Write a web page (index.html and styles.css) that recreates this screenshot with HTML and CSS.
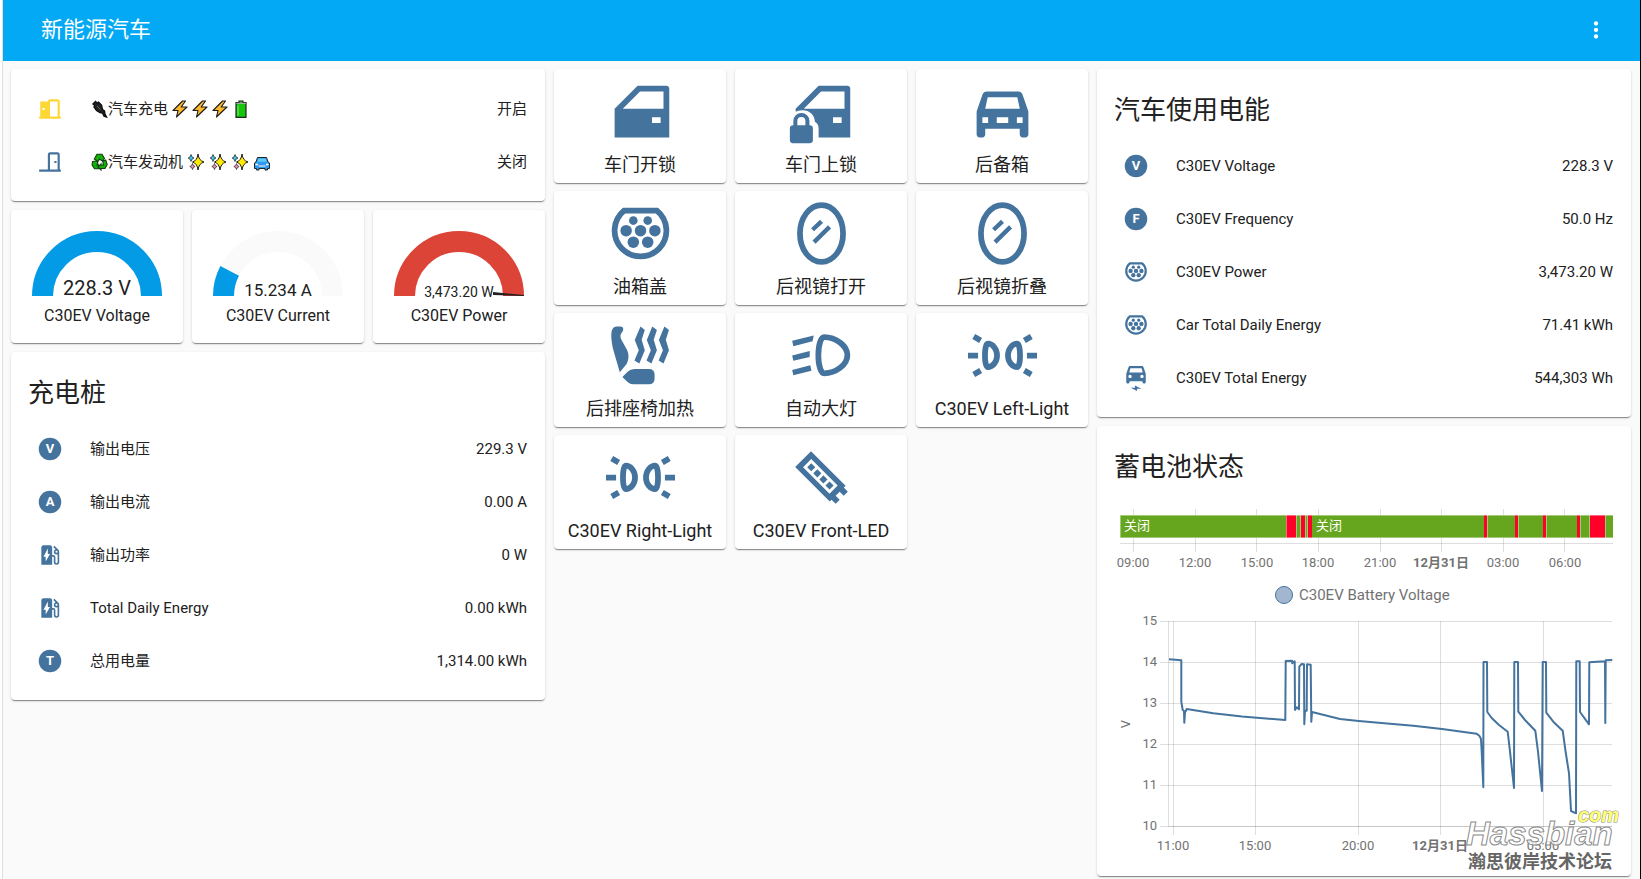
FILE: index.html
```html
<!DOCTYPE html>
<html lang="zh-CN">
<head>
<meta charset="utf-8">
<title>新能源汽车</title>
<link rel="stylesheet" href="styles.css">
</head>
<body>
<svg class="sprite" aria-hidden="true">
  <symbol id="door-open" viewBox="0 0 24 24"><path d="M12,3C10.89,3 10,3.89 10,5H3V19H2V21H22V19H21V5C21,3.89 20.11,3 19,3H12M12,5H19V19H12V5M5,11H7V13H5V11Z"/></symbol>
  <symbol id="door-closed" viewBox="0 0 24 24"><path d="M16,11H18V13H16V11M12,3H19C20.11,3 21,3.89 21,5V19H22V21H2V19H10V5C10,3.89 10.89,3 12,3M12,5V19H19V5H12Z"/></symbol>
  <symbol id="ev-station" viewBox="0 0 24 24"><path d="M19.77,7.23L19.78,7.22L16.06,3.5L15,4.56L17.11,6.67C16.17,7.03 15.5,7.93 15.5,9A2.5,2.5 0 0,0 18,11.5C18.36,11.5 18.69,11.42 19,11.29V18.5A1,1 0 0,1 18,19.5A1,1 0 0,1 17,18.5V14A2,2 0 0,0 15,12H14V5A2,2 0 0,0 12,3H6A2,2 0 0,0 4,5V21H14V13.5H15.5V18.5A2.5,2.5 0 0,0 18,21A2.5,2.5 0 0,0 20.5,18.5V9C20.5,8.31 20.22,7.68 19.77,7.23M18,10A1,1 0 0,1 17,9A1,1 0 0,1 18,8A1,1 0 0,1 19,9A1,1 0 0,1 18,10M8,18V13.5H6L10,6V11H12L8,18Z"/></symbol>
  <symbol id="car-electric" viewBox="0 0 24 24"><path d="M18.92 2C18.72 1.42 18.16 1 17.5 1H6.5C5.84 1 5.29 1.42 5.08 2L3 8V16C3 16.55 3.45 17 4 17H5C5.55 17 6 16.55 6 16V15H18V16C18 16.55 18.45 17 19 17H20C20.55 17 21 16.55 21 16V8L18.92 2M6.85 3H17.14L18.22 7H5.77L6.85 3M6.5 12C5.67 12 5 11.33 5 10.5S5.67 9 6.5 9 8 9.67 8 10.5 7.33 12 6.5 12M17.5 12C16.67 12 16 11.33 16 10.5S16.67 9 17.5 9 19 9.67 19 10.5 18.33 12 17.5 12M7 21H11V19L17 22H13V24L7 21Z"/></symbol>
  <symbol id="plug" viewBox="0 0 24 24"><path d="M6.34 4H17.66A9 9 0 1 1 6.34 4Z" fill="none" stroke="currentColor" stroke-width="2"/><circle cx="9.5" cy="7.5" r="1.5"/><circle cx="14.5" cy="7.5" r="1.5"/><circle cx="7" cy="11" r="2"/><circle cx="12" cy="11" r="2"/><circle cx="17" cy="11" r="2"/><circle cx="9.5" cy="15" r="2"/><circle cx="14.5" cy="15" r="2"/></symbol>
  <symbol id="car-door" viewBox="0 0 24 24"><path d="M19 14H16V16H19V14M22 21H3V11L11 3H21C21.55 3 22 3.45 22 4V21M11.83 5L5.83 11H20V5H11.83Z"/></symbol>
  <symbol id="car-door-lock" viewBox="0 0 24 24"><path d="M19 14H16V16H19V14M22 21H3V11L11 3H21C21.55 3 22 3.45 22 4V21M11.83 5L5.83 11H20V5H11.83Z"/><path d="M0 12H3.2C6.6 10.6 9.7 12.5 9.7 15.6C10.6 16 11 17 11 18V24H0Z" fill="#fff"/><rect x="1" y="16.8" width="8" height="6.2" rx="1.1"/><path d="M2.9 17.5V15.3A2.1 2.1 0 0 1 7.1 15.3V17.5" fill="none" stroke="currentColor" stroke-width="1.4"/></symbol>
  <symbol id="car-back" viewBox="0 0 24 24"><path d="M17.5 5H6.5C5.84 5 5.29 5.42 5.08 6L3 12V20C3 20.55 3.45 21 4 21H5C5.55 21 6 20.55 6 20V18H18V20C18 20.55 18.45 21 19 21H20C20.55 21 21 20.55 21 20V12L18.92 6C18.72 5.42 18.16 5 17.5 5M6.85 7H17.14L18.02 11H5.98L6.85 7M7 16H5V14H7V16M14 16H10V14H14V16M19 16H17V14H19V16Z"/></symbol>
  <symbol id="mirror" viewBox="0 0 24 24"><g fill="none" stroke="currentColor"><ellipse cx="12" cy="12" rx="7.5" ry="9.9" stroke-width="2"/><path d="M8.9 10.7L12 7.8M9.4 15L14.8 9.7" stroke-width="1.5"/></g></symbol>
  <symbol id="seat-heater" viewBox="0 0 24 24"><path d="M3.8 1.9H5C6.2 1.9 6.2 3.1 5.7 3.7C4.9 4.6 4.8 5.4 5.4 6.6L7.2 9.8C8.1 11.6 8 13.4 7.1 15L4.8 17.8L2.7 10.6C2 8.2 1.6 5 2 3.4C2.3 2.4 2.9 1.9 3.8 1.9ZM5.7 19.5L7.6 17.6Q8.5 16.7 9.9 16.7H14.9Q16.9 16.7 16.9 18.7V20Q16.9 22 14.9 22H9.4Q8.4 22 7.5 21.2Z"/><path d="M12 1.9L13.5 3.1L12.4 6.5L13.5 10.2L11.6 14.8L9.9 13.7L11.4 10.2L10 6.6ZM16.1 1.9L17.7 3.1L16.6 6.5L17.7 10.2L15.8 14.8L14.1 13.7L15.6 10.2L14.2 6.6ZM20.3 1.9L21.9 3.1L20.8 6.5L21.9 10.2L20 14.8L18.3 13.7L19.8 10.2L18.4 6.6Z"/></symbol>
  <symbol id="headlight" viewBox="0 0 24 24"><path d="M12.9 5.6C11.9 5.6 10.9 8 10.9 11.9C10.9 15.8 11.9 18.2 12.9 18.2C17 18.2 21 15.2 21 11.9C21 8.6 17 5.6 12.9 5.6Z" fill="none" stroke="currentColor" stroke-width="2"/><path d="M1.8 6.9L9.3 5L8.9 7L2.2 8.8ZM1.8 12L7.9 10.4V12.5L2.2 13.8ZM1.8 17L8.1 15.4L8.5 17.3L2.2 18.9Z"/></symbol>
  <symbol id="parking-light" viewBox="0 0 24 24"><g fill="none" stroke="currentColor" stroke-width="2"><path d="M6.9 7.9C6.2 7.9 5.9 10 5.9 12S6.2 16 6.9 16C8.6 16 10.1 14.2 10.1 12S8.6 7.9 6.9 7.9ZM17.1 7.9C17.8 7.9 18.1 10 18.1 12S17.8 16 17.1 16C15.4 16 13.9 14.2 13.9 12S15.4 7.9 17.1 7.9ZM0 12H3.5M20.5 12H24M2 5.4L4.4 6.8M2 18.6L4.4 17.2M22 5.4L19.6 6.8M22 18.6L19.6 17.2"/></g></symbol>
  <symbol id="led-strip" viewBox="0 0 24 24"><g transform="translate(5.6 5.6) rotate(45)"><path fill-rule="evenodd" d="M0 -3.9H17V-3H19V-1H17V1H19V3H17V3.9H0ZM2 -2V2H15V-2Z"/><path d="M3 -1H5V1H3ZM6 -1H8V1H6ZM9 -1H11V1H9ZM12 -1H14V1H12Z"/></g></symbol>
  <symbol id="bolt" viewBox="0 0 16 18"><path d="M10.5 1L1 10.5H6L4.5 17L15 7H9.2L13.5 1Z" fill="#fdb82b" stroke="#1b1b1b" stroke-width="1.1" stroke-linejoin="round"/></symbol>
  <symbol id="sparkle" viewBox="0 0 17 18"><path d="M10.5 1Q11.2 7.5 16.5 9Q11.2 10.5 10.5 17Q9.8 10.5 5 9Q9.8 7.5 10.5 1Z" fill="#ffeb00" stroke="#1b1b1b"/><path d="M3.5 1.5Q4 4.5 6.5 5Q4 5.5 3.5 8.5Q3 5.5 .6 5Q3 4.5 3.5 1.5Z" fill="#40c4ee" stroke="#1b1b1b" stroke-width=".7"/><path d="M5 10.5Q5.4 13 7.6 13.5Q5.4 14 5 16.5Q4.6 14 2.3 13.5Q4.6 13 5 10.5Z" fill="#f48fb1" stroke="#1b1b1b" stroke-width=".7"/></symbol>
</svg>

<div class="app">
  <header class="toolbar">
    <h1>新能源汽车</h1>
    <button class="menu" aria-label="菜单"><svg viewBox="0 0 24 24"><circle cx="12" cy="6" r="2"/><circle cx="12" cy="12" r="2"/><circle cx="12" cy="18" r="2"/></svg></button>
  </header>

  <main class="columns">
    <div class="column">
      <section class="card">
        <ul class="entities">
          <li><svg class="icon on"><use href="#door-open"/></svg>
            <span class="name emoji-name"><svg class="emoji" viewBox="0 0 16 18"><path d="M1.5 4L4 1.5L5.5 3L7 2.2L10 5L11 9.500L13 11L13.500 14L15 17L12.500 16.200L11 13L8.500 12.500L5 10.500L2.500 7L3.200 5.500Z" fill="#222" stroke="#111" stroke-width="1.4"/><path d="M5.500 6L9 9.500" stroke="#666"/></svg><span class="emoji-text">汽车充电</span><svg class="emoji bolt"><use href="#bolt"/></svg><svg class="emoji bolt"><use href="#bolt"/></svg><svg class="emoji bolt"><use href="#bolt"/></svg><svg class="emoji spark" viewBox="0 0 16 18"><path d="M6 1H10V2.5H13V17.3H3V2.5H6Z" fill="#16c60c" stroke="#222" stroke-width="1.2"/><path d="M3.4 3.4H12.6" stroke="#aaa" stroke-width="1.2"/><path d="M5 5.5V15.5" stroke="#8be77d"/></svg></span>
            <span class="state">开启</span></li>
          <li><svg class="icon"><use href="#door-closed"/></svg>
            <span class="name emoji-name"><svg class="emoji" viewBox="0 0 16 18"><path d="M5.5 1.2H10.5L13 5.500L10.800 8L8 6L6.500 8.500L2.800 6ZM11.2 8.200L14.200 7L15.700 11.500L13.5 15.500H9.500V17L6.5 14L9.500 10.800V12H12ZM1 8.5L5.500 7.800L6.500 11L5.500 12H6.800V15.8H3L.6 12Z" fill="#13b00a" stroke="#123d10" stroke-width="1.1"/></svg><span class="emoji-text">汽车发动机</span><svg class="emoji spark"><use href="#sparkle"/></svg><svg class="emoji spark"><use href="#sparkle"/></svg><svg class="emoji spark"><use href="#sparkle"/></svg><svg class="emoji spark" viewBox="0 0 17 18"><path d="M4 4.5H13L14.5 9L16 10V15.5H14V17H11.5V15.5H5.5V17H3V15.5H1V10L2.5 9Z" fill="#2b9af0" stroke="#222"/><path d="M4.8 5.5H12.2L13.2 8.8H3.8Z" fill="#5cc8f7"/><path d="M2 11.5H4.5M12.5 11.5H15" stroke="#fff" stroke-width="1.3"/><path d="M5 13H12" stroke="#ddd" stroke-width="1.3"/></svg></span>
            <span class="state">关闭</span></li>
        </ul>
      </section>

      <div class="trio">
        <section class="card gauge">
          <svg viewBox="0 0 130 66"><path d="M10.500 65A54.500 54.500 0 0 1 119.500 65" stroke="#039be5"/><text class="g-large" x="65" y="64">228.3 V</text></svg>
          <p>C30EV Voltage</p>
        </section>
        <section class="card gauge">
          <svg viewBox="0 0 130 66"><path d="M10.500 65A54.500 54.500 0 0 1 119.500 65" stroke="#fafafa"/><path d="M10.500 65A54.500 54.500 0 0 1 16.660 39.840" stroke="#039be5"/><text class="g-medium" x="65" y="65">15.234 A</text></svg>
          <p>C30EV Current</p>
        </section>
        <section class="card gauge">
          <svg viewBox="0 0 130 66"><path d="M10.500 65A54.500 54.500 0 0 1 119.500 65" stroke="#db4437"/><polygon points="99,61 130,64 130,65 99,64" fill="#212121"/><text class="g-small" x="65" y="66">3,473.20 W</text></svg>
          <p>C30EV Power</p>
        </section>
      </div>

      <section class="card">
        <h2>充电桩</h2>
        <ul class="entities">
          <li><svg class="icon" viewBox="0 0 24 24"><circle cx="12" cy="12" r="10.400"/><text x="12" y="16">V</text></svg><span class="name">输出电压</span><span class="state">229.3 V</span></li>
          <li><svg class="icon" viewBox="0 0 24 24"><circle cx="12" cy="12" r="10.400"/><text x="12" y="16">A</text></svg><span class="name">输出电流</span><span class="state">0.00 A</span></li>
          <li><svg class="icon"><use href="#ev-station"/></svg><span class="name">输出功率</span><span class="state">0 W</span></li>
          <li><svg class="icon"><use href="#ev-station"/></svg><span class="name">Total Daily Energy</span><span class="state">0.00 kWh</span></li>
          <li><svg class="icon" viewBox="0 0 24 24"><circle cx="12" cy="12" r="10.400"/><text x="12" y="16">T</text></svg><span class="name">总用电量</span><span class="state">1,314.00 kWh</span></li>
        </ul>
      </section>
    </div>

    <div class="column">
      <div class="trio">
        <button class="card action"><svg><use href="#car-door"/></svg><span>车门开锁</span></button>
        <button class="card action"><svg><use href="#car-door-lock"/></svg><span>车门上锁</span></button>
        <button class="card action"><svg><use href="#car-back"/></svg><span>后备箱</span></button>
        <button class="card action"><svg><use href="#plug"/></svg><span>油箱盖</span></button>
        <button class="card action"><svg><use href="#mirror"/></svg><span>后视镜打开</span></button>
        <button class="card action"><svg><use href="#mirror"/></svg><span>后视镜折叠</span></button>
        <button class="card action"><svg><use href="#seat-heater"/></svg><span>后排座椅加热</span></button>
        <button class="card action"><svg><use href="#headlight"/></svg><span>自动大灯</span></button>
        <button class="card action"><svg><use href="#parking-light"/></svg><span>C30EV Left-Light</span></button>
        <button class="card action"><svg><use href="#parking-light"/></svg><span>C30EV Right-Light</span></button>
        <button class="card action"><svg><use href="#led-strip"/></svg><span>C30EV Front-LED</span></button>
      </div>
    </div>

    <div class="column">
      <section class="card">
        <h2>汽车使用电能</h2>
        <ul class="entities">
          <li><svg class="icon" viewBox="0 0 24 24"><circle cx="12" cy="12" r="10.400"/><text x="12" y="16">V</text></svg><span class="name">C30EV Voltage</span><span class="state">228.3 V</span></li>
          <li><svg class="icon" viewBox="0 0 24 24"><circle cx="12" cy="12" r="10.400"/><text x="12" y="16">F</text></svg><span class="name">C30EV Frequency</span><span class="state">50.0 Hz</span></li>
          <li><svg class="icon"><use href="#plug"/></svg><span class="name">C30EV Power</span><span class="state">3,473.20 W</span></li>
          <li><svg class="icon"><use href="#plug"/></svg><span class="name">Car Total Daily Energy</span><span class="state">71.41 kWh</span></li>
          <li><svg class="icon"><use href="#car-electric"/></svg><span class="name">C30EV Total Energy</span><span class="state">544,303 Wh</span></li>
        </ul>
      </section>

      <section class="card">
        <h2>蓄电池状态</h2>
        <svg class="chart" viewBox="0 0 534 375">
          <g class="grid">
            <path d="M36.500 8V51M98.500 8V51M159.500 8V51M221.500 8V51M283.500 8V51M344.500 8V51M406.500 8V51M467.500 8V51M23 42.500H516"/>
          </g>
          <rect x="23" y="14" width="493" height="23" fill="#66a61e"/>
          <g fill="#ff0029">
            <rect x="189" y="14" width="10" height="23"/><rect x="204" y="14" width="4" height="23"/><rect x="211" y="14" width="4" height="23"/>
            <rect x="387" y="14" width="3" height="23"/><rect x="418" y="14" width="3" height="23"/><rect x="446" y="14" width="3" height="23"/>
            <rect x="480" y="14" width="3" height="23"/><rect x="493" y="14" width="15" height="23"/>
          </g>
          <path d="M23.500 14.500H516M23.500 36.500H516M23.500 14V37M189.500 14V37M199.500 14V37M203.500 14V37M208.500 14V37M210.500 14V37M390.500 14V37M421.500 14V37M449.500 14V37M483.500 14V37M492.500 14V37M508.500 14V37" stroke="#fff" stroke-opacity=".4"/>
          <g class="bar-label"><text x="27" y="29">关闭</text><text x="219" y="29">关闭</text></g>
          <g class="tick mid">
            <text x="36" y="66">09:00</text><text x="98" y="66">12:00</text><text x="160" y="66">15:00</text><text x="221" y="66">18:00</text><text x="283" y="66">21:00</text><text class="day" x="344" y="66">12月31日</text><text x="406" y="66">03:00</text><text x="468" y="66">06:00</text>
          </g>
          <circle cx="187" cy="94" r="8.500" fill="#a2b7cf" stroke="#44739e"/>
          <text class="legend" x="202" y="99">C30EV Battery Voltage</text>
          <g class="grid">
            <path d="M63 120.500H515M63 161.500H515M63 202.500H515M63 243.500H515M63 284.500H515M63 325.500H515M71.500 120V325M76.500 120V334M158.500 120V334M261.500 120V334M343.500 120V334M446.500 120V334"/>
            <path d="M71 325.500H515" stroke-opacity=".1"/>
          </g>
          <g class="tick end"><text x="60" y="124">15</text><text x="60" y="165">14</text><text x="60" y="206">13</text><text x="60" y="247">12</text><text x="60" y="288">11</text><text x="60" y="329">10</text></g>
          <g class="tick mid"><text x="76" y="349">11:00</text><text x="158" y="349">15:00</text><text x="261" y="349">20:00</text><text class="day" x="343" y="349">12月31日</text><text x="446" y="349">05:00</text><text transform="translate(33 223) rotate(-90)">V</text></g>
          <polyline class="series" points="72,158.300 84.300,159.300 84.300,200.700 85.700,209 87,210 87.300,221.700 88,211.700 89.700,208 116.300,212.300 145,215.500 188.300,219 188.700,160 195,159.700 195.300,162.300 197.700,160.300 198,209 199.700,206.300 202,208.300 202.300,165.700 204.700,163 207,163.300 207.300,223.300 208,209.700 209.700,209.700 210,163.300 213.700,163.700 214.300,220.700 215,211 243,218 261.700,220 293,222.700 316.300,224.700 345,228 379.700,232.700 382.500,235 384,238 384.700,250.700 386.300,286.300 386.500,161 390,161 390.300,211 394.700,217 402,224 410.700,230.700 413,250.700 417,287 417.300,161 421,161 421.300,210.700 428,219 438.300,229.700 441,250.700 445,290 445.700,161 449,161 449.300,211.700 456.300,220.700 465.700,229.700 468.500,250 472,272.300 474,310 479,312.300 479.300,160.300 482.700,160.300 483,211 492,223.300 492.300,161.300 508,160.300 508.300,222 508.700,159.300 515.300,159"/>
          <text class="mark" x="369" y="344">Hassbian</text>
          <text class="mark-com" x="481" y="321">com</text>
          <text class="mark-cn" x="371" y="367">瀚思彼岸技术论坛</text>
        </svg>
      </section>
    </div>
  </main>
</div>
</body>
</html>
```
FILE: styles.css
```css
* { box-sizing: border-box; }

body {
  margin: 0;
  background: #fff;
  color: #212121;
  font-family: Roboto, "Noto Sans CJK SC", sans-serif;
  font-size: 15px;
  line-height: 20px;
}

.sprite { position: absolute; width: 0; height: 0; }

.app {
  min-height: 100vh;
  margin-left: 2px;
  border-left: 1px solid #e0e0e0;
  border-right: 1px solid #000;
  background: #fafafa;
}

.toolbar {
  display: flex;
  align-items: center;
  justify-content: space-between;
  height: 61px;
  padding: 0 31px 2px 38px;
  background: #03a9f4;
  color: #fff;
}

.toolbar h1 { margin: 0; font-size: 22px; font-weight: 400; line-height: 32px; }

.menu { display: flex; padding: 0; border: 0; background: none; color: #fff; }
.menu svg { width: 26px; height: 26px; fill: currentColor; }

.columns {
  display: grid;
  grid-template-columns: repeat(3, minmax(0, 1fr));
  align-items: start;
  gap: 9px;
  padding: 8px 9px 3px 8px;
}

.column { display: flex; flex-direction: column; gap: 9px; }

.card {
  border-radius: 4px;
  background: #fff;
  box-shadow: 0 2px 1px -1px rgba(0, 0, 0, .3), 0 1px 1px rgba(0, 0, 0, .16), 0 1px 3px rgba(0, 0, 0, .12);
}

.card h2 {
  margin: 0;
  padding: 23px 17px 16px;
  font-size: 26px;
  font-weight: 400;
  line-height: 36px;
}

.entities {
  display: flex;
  flex-direction: column;
  gap: 9px;
  margin: 0;
  padding: 0 18px 17px 26px;
  list-style: none;
}

.entities:first-child { padding-top: 18px; }

.entities li { display: flex; align-items: center; height: 44px; }

.icon {
  flex: none;
  width: 26px;
  height: 26px;
  margin-right: 27px;
  color: #44739e;
  fill: currentColor;
}

.icon.on { color: #fdd835; }

.icon text {
  fill: #fff;
  font-size: 12px;
  font-weight: 700;
  text-anchor: middle;
}

.name { flex: 1; }

.emoji-name { display: flex; align-items: center; padding-left: 1px; }
.emoji-text { margin-right: 2px; }

.emoji { width: 17px; height: 18px; }
.bolt { width: 16px; margin: 0 2px; }
.spark { width: 18px; margin: 0 2px; }

.trio { display: grid; grid-template-columns: repeat(3, minmax(0, 1fr)); gap: 8px 9px; }

.gauge {
  display: flex;
  flex-direction: column;
  align-items: center;
  padding: 21px 8px 17px;
}

.gauge svg { width: 130px; height: 66px; overflow: visible; }
.gauge path { fill: none; stroke-width: 21px; }
.gauge text { fill: #212121; text-anchor: middle; }
.gauge p { margin: 9px 0 0; font-size: 16px; }
.g-large { font-size: 20px; }
.g-medium { font-size: 17px; }
.g-small { font-size: 14px; }

.action {
  display: flex;
  flex-direction: column;
  align-items: center;
  height: 114px;
  padding: 8px 0 0;
  border: 0;
  color: #212121;
  font: inherit;
  font-size: 18px;
  line-height: 26px;
}

.action svg { width: 69px; height: 69px; margin-bottom: 6px; color: #44739e; fill: currentColor; }

.chart { display: block; width: 100%; height: auto; }
.grid { fill: none; stroke: #000; stroke-opacity: .13; }
.tick { fill: #727272; font-size: 13px; }
.mid { text-anchor: middle; }
.end { text-anchor: end; }
.day { font-weight: 700; }
.bar-label { fill: #fff; font-size: 13px; }
.legend { fill: #727272; font-size: 15px; }
.series { fill: none; stroke: #44739e; stroke-width: 2px; stroke-linejoin: round; }

.mark, .mark-com {
  font-family: "Liberation Sans", Arial, sans-serif;
  font-style: italic;
  font-weight: 700;
  stroke: #8a8a8a;
}

.mark { fill: #fff; fill-opacity: .75; font-size: 33px; }
.mark-com { fill: #ffff73; font-size: 20px; paint-order: stroke; }
.mark-cn { fill: #666; font-size: 18px; font-weight: 700; }
```
